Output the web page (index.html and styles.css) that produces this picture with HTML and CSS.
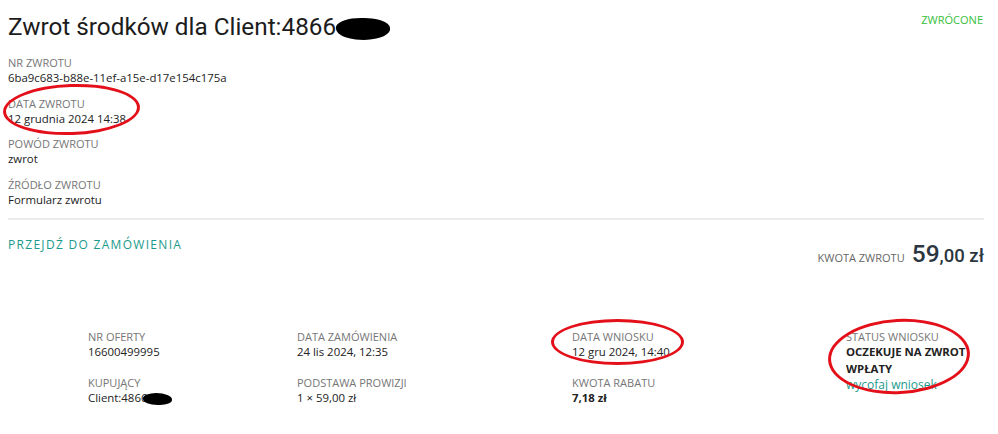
FILE: index.html
```html
<!DOCTYPE html>
<html lang="pl">
<head>
    <meta charset="UTF-8">
    <meta name="viewport" content="width=device-width, initial-scale=1.0">
    <title>Zwrot środków</title>
    <link rel="stylesheet" href="styles.css">
</head>
<body>
    <div id="w">
        <div class="head">
            <h1>Zwrot środków dla Client:4866<span class="blot blot-title"></span></h1>
            <span class="state">ZWRÓCONE</span>
        </div>

        <dl class="info">
            <div class="item">
                <dt>NR ZWROTU</dt>
                <dd>6ba9c683-b88e-11ef-a15e-d17e154c175a</dd>
            </div>
            <div class="item">
                <dt>DATA ZWROTU</dt>
                <dd>12 grudnia 2024 14:38</dd>
                <span class="ring ring-date"></span>
            </div>
            <div class="item">
                <dt>POWÓD ZWROTU</dt>
                <dd>zwrot</dd>
            </div>
            <div class="item">
                <dt>ŹRÓDŁO ZWROTU</dt>
                <dd>Formularz zwrotu</dd>
            </div>
        </dl>

        <div class="bar">
            <a class="go" href="#">PRZEJDŹ DO ZAMÓWIENIA</a>
            <div class="sum">
                <span class="sum-label">KWOTA ZWROTU</span>
                <span class="sum-value">59<small>,00 zł</small></span>
            </div>
        </div>

        <div class="order">
            <div class="cell">
                <p class="lbl">NR OFERTY</p>
                <p class="val">16600499995</p>
            </div>
            <div class="cell">
                <p class="lbl">DATA ZAMÓWIENIA</p>
                <p class="val">24 lis 2024, 12:35</p>
            </div>
            <div class="cell">
                <p class="lbl">DATA WNIOSKU</p>
                <p class="val">12 gru 2024, 14:40</p>
                <span class="ring ring-req"></span>
            </div>
            <div class="cell status">
                <p class="lbl">STATUS WNIOSKU</p>
                <p class="val strong">OCZEKUJE NA ZWROT WPŁATY</p>
                <a class="cancel" href="#">wycofaj wniosek</a>
                <span class="ring ring-status"></span>
            </div>
            <div class="cell">
                <p class="lbl">KUPUJĄCY</p>
                <p class="val">Client:4866<span class="blot blot-buyer"></span></p>
            </div>
            <div class="cell">
                <p class="lbl">PODSTAWA PROWIZJI</p>
                <p class="val">1 × 59,00 zł</p>
            </div>
            <div class="cell">
                <p class="lbl">KWOTA RABATU</p>
                <p class="val strong">7,18 zł</p>
            </div>
        </div>
    </div>
</body>
</html>
```

FILE: styles.css
```css
* {
    margin: 0;
    padding: 0;
    box-sizing: border-box;
}
body {
    background: #fff;
    color: #222;
    font-family: "Open Sans", "Liberation Sans", sans-serif;
}
#w {
    width: 984px;
    padding: 10px 0 0 8px;
}
.head {
    display: flex;
    justify-content: space-between;
    align-items: flex-start;
    height: 46px;
}
h1 {
    font-family: Roboto, "Liberation Sans", sans-serif;
    font-weight: 400;
    font-size: 24.3px;
    line-height: 34px;
    color: #1c1c1c;
}
.state {
    margin-top: 2px;
    font-size: 11px;
    color: #36c03b;
    padding-right: 1px;
}
.blot {
    display: inline-block;
    background: #000;
    vertical-align: middle;
}
.blot-title {
    width: 54px;
    height: 22px;
    border-radius: 40% 55% 45% 60%;
    transform: rotate(-3deg);
}
.blot-buyer {
    width: 29px;
    height: 12px;
    border-radius: 50% 60% 45% 55%;
    margin-left: -4px;
}

.info {
    border-bottom: 2px solid #ececec;
}
.item {
    position: relative;
    height: 40.5px;
}
dt,
.lbl {
    font-size: 11px;
    line-height: 14px;
    color: #767676;
}
dd,
.val {
    font-size: 11.4px;
    line-height: 16px;
    color: #222;
}
.ring {
    position: absolute;
    border: 3px solid #e3101a;
    border-radius: 50%;
    pointer-events: none;
}
.ring-date {
    left: -5px;
    top: -13px;
    width: 137px;
    height: 51px;
    transform: rotate(-2deg);
}

.bar {
    display: flex;
    justify-content: space-between;
    align-items: flex-start;
    padding-top: 16px;
    height: 110px;
}
.go {
    font-size: 12px;
    letter-spacing: 1.3px;
    color: #1b9a8c;
    text-decoration: none;
}
.sum {
    display: flex;
    align-items: baseline;
    gap: 7px;
    margin-top: 3px;
}
.sum-label {
    font-size: 11px;
    color: #666;
}
.sum-value {
    font-family: Roboto, "Liberation Sans", sans-serif;
    font-weight: 500;
    font-size: 24.5px;
    color: #2b3640;
}
.sum-value small {
    font-size: 18.5px;
}

.order {
    display: grid;
    grid-template-columns: 209px 275px 274px 140px;
    row-gap: 16px;
    padding-left: 80px;
}
.cell {
    position: relative;
}
.strong {
    font-weight: 700;
}
.status {
    grid-row: span 2;
}
.status .val {
    width: 135px;
    line-height: 16.5px;
}
.cancel {
    display: block;
    font-size: 12px;
    line-height: 16px;
    color: #1b9a8c;
    text-decoration: none;
}
.ring-req {
    left: -21px;
    top: -11px;
    width: 133px;
    height: 46px;
}
.ring-status {
    left: -18px;
    top: -11px;
    width: 142px;
    height: 75px;
    transform: rotate(-3deg);
}
```
